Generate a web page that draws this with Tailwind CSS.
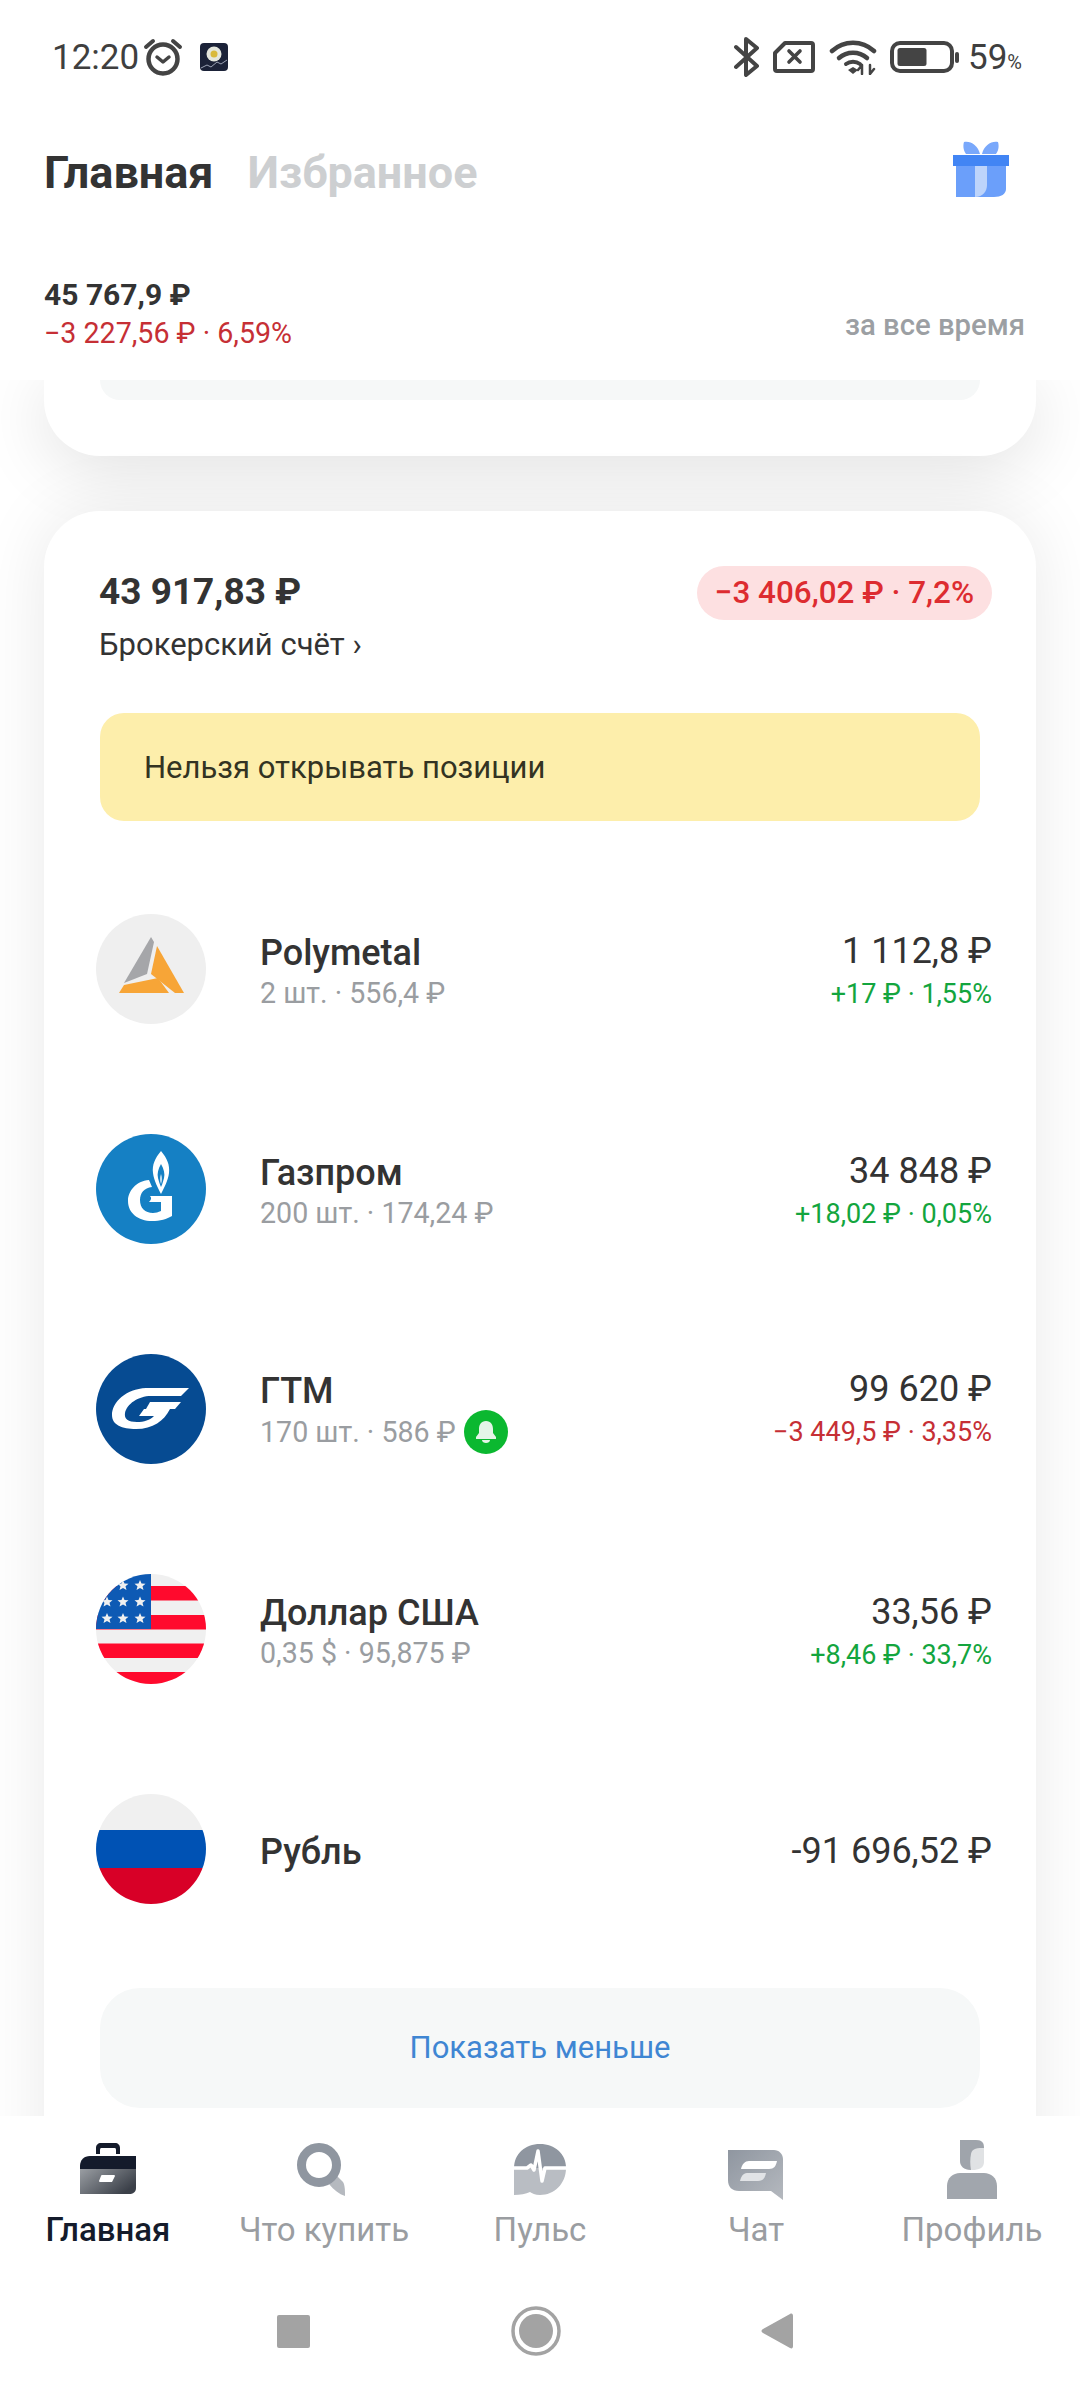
<!DOCTYPE html>
<html lang="ru">
<head>
<meta charset="utf-8">
<script src="https://cdn.jsdelivr.net/npm/@tailwindcss/browser@4"></script>
</head>
<body class="bg-white">
<div class="w-[1080px] h-[2400px] flex flex-col overflow-hidden bg-white font-['Roboto',sans-serif] text-[#333333]">

  <!-- top -->
  <header class="h-[380px] shrink-0 bg-white relative z-10 flex flex-col">
    <div class="h-[114px] flex items-center justify-between pl-[52px] pr-[58px] text-[#3f3f3f]">
      <div class="flex items-center">
        <span class="text-[35px] leading-none">12:20</span>
        <svg class="ml-[4px]" width="40" height="38" viewBox="0 0 40 38" fill="none" stroke="#444" stroke-linecap="round" stroke-linejoin="round"><circle cx="20" cy="21" r="14.5" stroke-width="4.5"/><path d="M14 19l6 5 6-5" stroke-width="3.5"/><path d="M3 9l7-6M37 9l-7-6" stroke-width="4"/></svg>
        <svg class="ml-[17px]" width="28" height="28" viewBox="0 0 28 28"><rect width="28" height="28" rx="4" fill="#1b2238"/><circle cx="14" cy="11" r="7.5" fill="#e4e6dc"/><circle cx="14" cy="11" r="3.5" fill="#d9b93b"/><path d="M1 25l6-3 4 2 6-5 4 2 6-4" stroke="#9ba3b5" stroke-width="1" fill="none"/></svg>
      </div>
      <div class="flex items-center">
        <svg width="26" height="40" viewBox="0 0 26 40" fill="none" stroke="#444" stroke-width="4" stroke-linecap="round" stroke-linejoin="round"><path d="M2 10l21 19-11 9V2l11 9L2 30"/></svg>
        <svg class="ml-[13px]" width="42" height="32" viewBox="0 0 42 32" fill="none" stroke="#444" stroke-linejoin="round"><path d="M12 2h26a2 2 0 0 1 2 2v24a2 2 0 0 1-2 2H4a2 2 0 0 1-2-2V12z" stroke-width="4"/><path d="M16 10l11 11M27 10L16 21" stroke-width="3.6" stroke-linecap="round"/></svg>
        <svg class="ml-[14px]" width="48" height="36" viewBox="0 0 48 36" fill="none" stroke="#444" stroke-linecap="round"><path d="M3 12c12-11 30-11 42 0" stroke-width="4.5"/><path d="M10 19c8-7 20-7 28 0" stroke-width="4.5"/><path d="M17 25c4-3 10-3 14 0" stroke-width="4"/><path d="M19 31l5-3 5 3-5 4z" fill="#444" stroke="none"/><path d="M33 26v9M29 31l4-5M41 26v9M41 35l4-5" stroke-width="2.5"/></svg>
        <svg class="ml-[13px]" width="69" height="32" viewBox="0 0 69 32" fill="none"><rect x="2" y="2" width="60" height="28" rx="8" stroke="#444" stroke-width="4"/><rect x="7.500" y="7" width="29" height="18" rx="2.500" fill="#444"/><rect x="65" y="11" width="4" height="11" rx="2" fill="#444"/></svg>
        <span class="ml-[9px] text-[35px] leading-none">59</span><span class="text-[20px] leading-none mt-[9px]">%</span>
      </div>
    </div>
    <div class="h-[118px] flex items-center justify-between pl-[44px] pr-[71px]">
      <div class="flex items-center gap-[34px] text-[45px] font-bold leading-none -mt-[2px]">
        <span class="text-[#333333]">Главная</span>
        <span class="text-[#cdcfd1]">Избранное</span>
      </div>
      <svg class="-mt-[8px]" width="56" height="56" viewBox="0 0 56 56">
        <path d="M11 1c6-1.500 14 3 16 12H13C10 9 10 4 11 1zM45 1c-6-1.500-14 3-16 12h14c3-4 3-9 2-12z" fill="#79a8fb"/>
        <path d="M3 24h50v24c0 5-5 8-12 8H3z" fill="#6b9ffa"/>
        <path d="M22 24h12v20c0 6-4 12-12 12z" fill="#bdd4fb"/>
        <rect y="14" width="56" height="11" fill="#4285f4"/>
      </svg>
    </div>
    <div class="flex-1 flex items-start justify-between pl-[44px] pr-[55px] pt-[44px]">
      <div>
        <div class="text-[30px] font-bold leading-[38px] text-[#333333]">45 767,9 ₽</div>
        <div class="text-[28.6px] leading-[38px] text-[#c62f35]">−3 227,56 ₽ · 6,59%</div>
      </div>
      <div class="text-[29.3px] font-medium leading-[38px] text-[#9c9fa3] mt-[30px]">за все время</div>
    </div>
  </header>

  <!-- feed -->
  <main class="h-[1736px] shrink-0 overflow-hidden px-[44px] bg-white">
    <section class="h-[76px] bg-white rounded-b-[56px] shadow-[0_10px_70px_rgba(0,0,0,0.13)] px-[56px]">
      <div class="h-[20px] bg-[#f6f8f8] rounded-b-[24px]"></div>
    </section>
    <section class="mt-[55px] h-[1700px] bg-white rounded-t-[56px] shadow-[0_0_70px_rgba(0,0,0,0.09)] px-[56px] pt-[54px]">
      <div class="flex items-start justify-between">
        <div class="-ml-[1px]">
          <div class="text-[37px] font-bold leading-[54px] text-[#333333]">43 917,83 ₽</div>
          <div class="text-[31px] leading-[46px] mt-[3px] text-[#333333]">Брокерский счёт ›</div>
        </div>
        <div class="mt-[1px] h-[54px] px-[18px] -mr-[12px] rounded-[27px] bg-[#fde0e1] text-[#dd2c30] text-[31.4px] font-medium flex items-center">−3 406,02 ₽ · 7,2%</div>
      </div>
      <div class="mt-[45px] h-[108px] rounded-[24px] bg-[#fdeeab] flex items-center pl-[44px] pt-[2px] text-[31px] text-[#333322]">Нельзя открывать позиции</div>

      <div class="-ml-[4px] -mr-[12px] mt-[38px]">
        <!-- Polymetal -->
        <div class="h-[220px] flex items-center">
          <svg class="shrink-0" width="110" height="110" viewBox="0 0 110 110"><circle cx="55" cy="55" r="55" fill="#efefef"/><path d="M55 23l3 5-7 32-23 9z" fill="#a5a6a9"/><path d="M61 32l27 47h-9L55 60z" fill="#f7a537"/><path d="M62 64l11 15H23l5-8z" fill="#f7a537"/></svg>
          <div class="ml-[54px] flex-1 pt-[7px]">
            <div class="text-[36px] font-medium leading-[40px]">Polymetal</div>
            <div class="text-[28.6px] leading-[40px] text-[#9a9da1]">2 шт. · 556,4 ₽</div>
          </div>
          <div class="text-right pt-[10px]">
            <div class="text-[36px] leading-[40px]">1 112,8 ₽</div>
            <div class="text-[27px] leading-[46px] text-[#13a53e]">+17 ₽ · 1,55%</div>
          </div>
        </div>
        <!-- Gazprom -->
        <div class="h-[220px] flex items-center">
          <svg class="shrink-0" width="110" height="110" viewBox="0 0 110 110"><circle cx="55" cy="55" r="55" fill="#1580c4"/><path d="M65 17c6 7 9 14 8 22-1 8-5 15-8 21-3-6-7-13-8-21-1-8 2-15 8-22z" fill="#fff"/><path d="M65 30c3 5 4 10 3 14-1 4-2 7-3 9-1-2-2-5-3-9-1-4 0-9 3-14z" fill="#1580c4"/><path d="M65 40c1 3 1 7 0 10-1-3-1-7 0-10z" fill="#fff"/><path d="M53 46c-13 1-21 11-21 21 0 12 10 20 24 20 8 0 15-2 20-5V62H54c2 2 1 4-1 6h12v9c-3 1-5 2-8 2-8 0-13-5-13-13 0-7 4-12 12-13z" fill="#fff"/></svg>
          <div class="ml-[54px] flex-1 pt-[8px]">
            <div class="text-[36px] font-medium leading-[40px]">Газпром</div>
            <div class="text-[28.6px] leading-[40px] text-[#9a9da1]">200 шт. · 174,24 ₽</div>
          </div>
          <div class="text-right pt-[10px]">
            <div class="text-[36px] leading-[40px]">34 848 ₽</div>
            <div class="text-[27px] leading-[46px] text-[#13a53e]">+18,02 ₽ · 0,05%</div>
          </div>
        </div>
        <!-- GTM -->
        <div class="h-[220px] flex items-center">
          <svg class="shrink-0" width="110" height="110" viewBox="0 0 110 110"><circle cx="55" cy="55" r="55" fill="#064b92"/><path d="M93 34H50C30 35 16 48 16 61c0 10 10 14 24 14 17 0 28-8 34-20H48l-5 7h15c-4 4-10 6-17 6-9 0-13-3-12-9 2-9 13-17 26-17h30z" fill="#fff"/><path d="M54 48h31l-6 7H50z" fill="#fff"/></svg>
          <div class="ml-[54px] flex-1 pt-[5px]">
            <div class="text-[36px] font-medium leading-[40px]">ГТМ</div>
            <div class="flex items-center h-[41px] text-[28.6px] leading-[40px] text-[#9a9da1]">
              <span>170 шт. · 586 ₽</span>
              <span class="ml-[8px] w-[44px] h-[44px] rounded-full bg-[#0bb830] flex items-center justify-center"><svg width="22" height="24" viewBox="0 0 22 24"><path d="M11 1c-5 0-7 4-7 8v4l-3 4v2h20v-2l-3-4V9c0-4-2-8-7-8z" fill="#e4f5e8"/><path d="M7 20h8c0 2-2 3-4 3s-4-1-4-3z" fill="#e4f5e8"/></svg></span>
            </div>
          </div>
          <div class="text-right pt-[7px]">
            <div class="text-[36px] leading-[40px]">99 620 ₽</div>
            <div class="text-[27px] leading-[47px] text-[#c62f35]">−3 449,5 ₽ · 3,35%</div>
          </div>
        </div>
        <!-- USD -->
        <div class="h-[220px] flex items-center">
          <svg class="shrink-0 rounded-full" width="110" height="110" viewBox="0 0 110 110"><rect width="110" height="110" fill="#f0f0f0"/><rect y="12" width="110" height="14.500" fill="#ff0a2d"/><rect y="41" width="110" height="14.500" fill="#ff0a2d"/><rect y="69.500" width="110" height="14.500" fill="#ff0a2d"/><rect y="98" width="110" height="12" fill="#ff0a2d"/><rect width="55" height="55" fill="#0e5ab4"/><g fill="#f0f0f0"><path d="M27 6l1.500 3.500 4 .3-3 2.500 1 3.800-3.500-2-3.500 2 1-3.800-3-2.500 4-.3z"/><path d="M44 6l1.500 3.500 4 .3-3 2.500 1 3.800-3.500-2-3.500 2 1-3.800-3-2.500 4-.3z"/><path d="M11 22.500l1.500 3.500 4 .3-3 2.500 1 3.800-3.500-2-3.500 2 1-3.800-3-2.500 4-.3z"/><path d="M27 22.500l1.500 3.500 4 .3-3 2.500 1 3.800-3.500-2-3.500 2 1-3.800-3-2.500 4-.3z"/><path d="M44 22.500l1.500 3.500 4 .3-3 2.500 1 3.800-3.500-2-3.500 2 1-3.800-3-2.500 4-.3z"/><path d="M11 39l1.500 3.500 4 .3-3 2.500 1 3.800-3.500-2-3.500 2 1-3.800-3-2.500 4-.3z"/><path d="M27 39l1.500 3.500 4 .3-3 2.500 1 3.800-3.500-2-3.500 2 1-3.800-3-2.500 4-.3z"/><path d="M44 39l1.500 3.500 4 .3-3 2.500 1 3.800-3.500-2-3.500 2 1-3.800-3-2.500 4-.3z"/></g></svg>
          <div class="ml-[54px] flex-1 pt-[8px]">
            <div class="text-[36px] font-medium leading-[40px]">Доллар США</div>
            <div class="text-[28.6px] leading-[40px] text-[#9a9da1]">0,35 $ · 95,875 ₽</div>
          </div>
          <div class="text-right pt-[11px]">
            <div class="text-[36px] leading-[40px]">33,56 ₽</div>
            <div class="text-[27px] leading-[46px] text-[#13a53e]">+8,46 ₽ · 33,7%</div>
          </div>
        </div>
        <!-- RUB -->
        <div class="h-[220px] flex items-center">
          <svg class="shrink-0 rounded-full" width="110" height="110" viewBox="0 0 110 110"><rect width="110" height="36" fill="#f0f0f0"/><rect y="36" width="110" height="38" fill="#0052b4"/><rect y="74" width="110" height="36" fill="#d80027"/></svg>
          <div class="ml-[54px] flex-1 pt-[5px] text-[36px] font-medium leading-[40px]">Рубль</div>
          <div class="pt-[3px] text-[36px] leading-[40px]">-91 696,52 ₽</div>
        </div>
      </div>

      <div class="mt-[29px] h-[120px] rounded-[40px] bg-[#f6f8f8] flex items-center justify-center pt-[1px] text-[31px] text-[#3f86d3]">Показать меньше</div>
    </section>
  </main>

  <!-- tabs -->
  <nav class="h-[168px] shrink-0 bg-white grid grid-cols-5 relative z-10">
    <div class="flex flex-col items-center">
      <svg class="mt-[24px]" width="60" height="60" viewBox="0 0 60 60"><defs><linearGradient id="g1" x1="0" y1="0" x2="1" y2="0.600"><stop offset="0" stop-color="#9a9ea3"/><stop offset="1" stop-color="#3b4049"/></linearGradient></defs><path d="M18 14v-6c0-3 2-5 5-5h14c3 0 5 2 5 5v6h-4V10c0-2-1-2-2-2H24c-1 0-2 0-2 2v4z" fill="#141b2b"/><path d="M12 16h46v13H2v-3c0-6 4-10 10-10z" fill="#141b2b"/><path d="M2 29h56v19c0 4-3 6-7 6H2z" fill="url(#g1)"/><path d="M24 35h12c1 0 1 1 1 1l-3 6H22c-1 0-1-1-1-1l2-5c0-1 1-1 1-1z" fill="#fff"/></svg>
      <span class="mt-[10px] text-[33px] font-medium leading-[40px] text-[#141b2b]">Главная</span>
    </div>
    <div class="flex flex-col items-center text-[#9a9da1]">
      <svg class="mt-[24px]" width="60" height="60" viewBox="0 0 60 60"><path d="M35 44l8-8 6 6c2 3 2 9 2 14-6-2-11-6-16-12z" fill="#b5b9bf"/><circle cx="25" cy="25" r="17.500" fill="none" stroke="#8f96a0" stroke-width="9"/></svg>
      <span class="mt-[10px] text-[33px] leading-[40px]">Что купить</span>
    </div>
    <div class="flex flex-col items-center text-[#9a9da1]">
      <svg class="mt-[24px]" width="60" height="60" viewBox="0 0 60 60"><path d="M4 28C4 14 15 4 30 4s26 10 26 24z" fill="#8f96a0"/><path d="M4 28h52c0 16-12 27-26 27-5 0-8-2-10-3-4 2-10 3-16 3z" fill="#b9bdc3"/><path d="M4 28h13l4-3 3 5 4-19 4 30 3-13h21" fill="none" stroke="#fff" stroke-width="3.500" stroke-linejoin="round"/></svg>
      <span class="mt-[10px] text-[33px] leading-[40px]">Пульс</span>
    </div>
    <div class="flex flex-col items-center text-[#9a9da1]">
      <svg class="mt-[24px]" width="60" height="60" viewBox="0 0 60 60"><defs><linearGradient id="g2" x1="0" y1="0" x2="1" y2="1"><stop offset="0" stop-color="#8f96a0"/><stop offset="1" stop-color="#b5b9bf"/></linearGradient></defs><path d="M2 10h46c5 0 9 4 9 9v41L45 51H13C6 51 2 47 2 40z" fill="url(#g2)"/><path d="M23 21h28c-1 5-3 8-8 8H15c1-5 4-8 8-8z" fill="#fff"/><path d="M21 33h19c-1 5-3 8-8 8H14c1-4 3-8 7-8z" fill="#e1e3e6"/></svg>
      <span class="mt-[10px] text-[33px] leading-[40px]">Чат</span>
    </div>
    <div class="flex flex-col items-center text-[#9a9da1]">
      <svg class="mt-[24px]" width="60" height="60" viewBox="0 0 60 60"><path d="M18 0h16c5 0 8 2 8 6v16c0 6-5 8-12 8s-12-3-12-9z" fill="#e0e2e4"/><path d="M18 0h16c6 0 8 3 8 8-6 0-12 0-13 6-1 5-1 10 0 16-7 0-11-4-11-9z" fill="#9fa4ab"/><path d="M5 59V46c0-8 6-13 13-13h24c7 0 13 5 13 13v13z" fill="#a1a6ad"/></svg>
      <span class="mt-[10px] text-[33px] leading-[40px]">Профиль</span>
    </div>
  </nav>

  <!-- android nav -->
  <div class="h-[116px] shrink-0 bg-white flex items-start justify-center pt-[22px] pr-[10px] relative z-10">
    <div class="w-[516px] h-[50px] flex items-center justify-between">
      <div class="w-[33px] h-[33px] rounded-[2px] bg-[#a3a3a3]"></div>
      <svg width="50" height="50" viewBox="0 0 50 50"><circle cx="25" cy="25" r="23" fill="none" stroke="#a3a3a3" stroke-width="3.500"/><circle cx="25" cy="25" r="17" fill="#a3a3a3"/></svg>
      <svg width="32" height="38" viewBox="0 0 32 38"><path d="M29 2c2-1 3 0 3 2v30c0 2-1 3-3 2L2 21c-2-1-2-3 0-4z" fill="#a3a3a3"/></svg>
    </div>
  </div>
</div>
</body>
</html>
